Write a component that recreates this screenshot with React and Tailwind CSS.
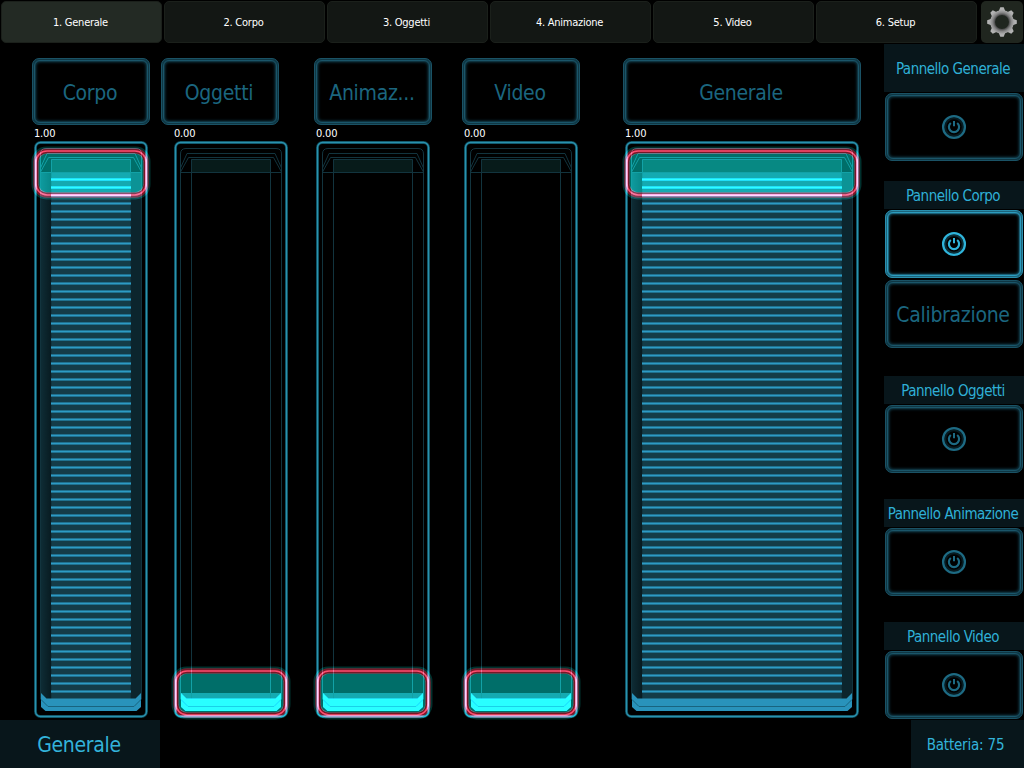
import { useState } from 'react';
import clsx from 'clsx';

const TABS = ['1. Generale', '2. Corpo', '3. Oggetti', '4. Animazione', '5. Video', '6. Setup'];

const HEADERS = [
  { label: 'Corpo', className: 'ml-8 w-[118px]' },
  { label: 'Oggetti', className: 'ml-[11px] w-[118px]' },
  { label: 'Animaz...', className: 'ml-[35px] w-[118px]' },
  { label: 'Video', className: 'ml-[30px] w-[118px]' },
  { label: 'Generale', className: 'ml-[43px] w-[238px]' },
];

const FADERS = [
  { id: 'corpo', value: 1, width: 114, className: 'ml-[34px]' },
  { id: 'oggetti', value: 0, width: 114, className: 'ml-[26px]' },
  { id: 'animazione', value: 0, width: 114, className: 'ml-7' },
  { id: 'video', value: 0, width: 114, className: 'ml-[34px]' },
  { id: 'generale', value: 1, width: 234, className: 'ml-[47px]' },
];

const PANELS = [
  { label: 'Pannello Generale', labelClass: 'h-12 pt-[3px]', className: '' },
  { label: 'Pannello Corpo', labelClass: 'h-7 pt-[3px]', className: 'mt-5', extra: 'Calibrazione' },
  { label: 'Pannello Oggetti', labelClass: 'h-7 pt-[3px]', className: 'mt-7' },
  { label: 'Pannello Animazione', labelClass: 'h-7 pt-[3px]', className: 'mt-[26px]' },
  { label: 'Pannello Video', labelClass: 'h-7 pt-[3px]', className: 'mt-[26px]' },
];

function GearIcon() {
  return (
    <svg width="32" height="32" viewBox="-16 -16 32 32">
      <defs>
        <radialGradient id="gear" gradientUnits="userSpaceOnUse" cx="0" cy="0" r="15">
          <stop offset="0.48" stopColor="#4c4c4c" />
          <stop offset="0.62" stopColor="#858585" />
          <stop offset="0.8" stopColor="#adadad" />
          <stop offset="1" stopColor="#b8b8b8" />
        </radialGradient>
      </defs>
      {[0, 45, 90, 135, 180, 225, 270, 315].map((a) => (
        <path key={a} d="M-3.6 -10 L-1.7 -14.8 H1.7 L3.6 -10 Z" fill="url(#gear)" transform={`rotate(${a})`} />
      ))}
      <circle r="9.4" fill="none" stroke="url(#gear)" strokeWidth="4.8" />
    </svg>
  );
}

function PowerIcon({ on }) {
  return (
    <svg
      width="26"
      height="26"
      viewBox="-13 -13 26 26"
      fill="none"
      className={on ? 'text-[#2fb4db]' : 'text-[#1d6a83]'}
    >
      <circle r="8.8" stroke="currentColor" strokeWidth="2" opacity="0.25" />
      <circle r="10.9" stroke="currentColor" strokeWidth="2.3" />
      <path d="M-3.2 -4 A5.1 5.1 0 1 0 3.2 -4" stroke="currentColor" strokeWidth="2.2" />
      <path d="M0 -6 V-0.8" stroke="currentColor" strokeWidth="2" />
    </svg>
  );
}

function NeonButton({ active, className, onClick, children }) {
  return (
    <button
      onClick={onClick}
      className={clsx(
        'shrink-0 rounded-[7px] border p-px',
        active ? 'border-[#2a8fae] bg-[#1c657c]' : 'border-[#1a5265] bg-[#0f3744]',
        className
      )}
    >
      <span
        className={clsx(
          'flex h-full w-full rounded-[6px] border p-px',
          active ? 'border-[#2c9cbe] bg-[#1b6178]' : 'border-[#1a5569] bg-[#0e323e]'
        )}
      >
        <span
          className={clsx(
            'flex flex-1 items-center justify-center rounded-[4px] bg-black',
            active
              ? 'text-[#2fb4db] shadow-[inset_0_0_3px_#1b677e]'
              : 'text-[#1b667f] shadow-[inset_0_0_3px_#134657]'
          )}
        >
          {children}
        </span>
      </span>
    </button>
  );
}

function Fader({ value, width: w }) {
  const full = value === 1;
  const stripes = full ? Array.from({ length: 65 }, (_, i) => 37 + i * 8) : [];
  const r = w - 6.5;
  const knobY = full ? 10 : 530;
  const top = full ? 31 : 552;

  return (
    <svg width={w} height="576" viewBox={`0 0 ${w} 576`} fill="none" className="isolate block overflow-visible">
      <defs>
        <linearGradient id="side" x1="0" x2="1">
          <stop offset="0" stopColor="#0e2c35" />
          <stop offset="1" stopColor="#081b21" />
        </linearGradient>
      </defs>

      {/* housing */}
      <rect x="1.5" y="1.5" width={w - 3} height="574" rx="5" stroke="#0e4a58" strokeWidth="3" />
      <rect x="1.5" y="1.5" width={w - 3} height="574" rx="5" stroke="#2a91ae" strokeWidth="1.3" />

      {/* level */}
      <rect x="6.5" y={top} width={r - 6.5} height={558 - top} fill={full ? '#0c252d' : '#143c48'} />
      {full && (
        <>
          <rect x="7" y={top} width="10" height={558 - top} fill="url(#side)" />
          <rect x="17" y={top} width={w - 34} height={558 - top} fill="#143c48" />
        </>
      )}

      {/* top bezel */}
      <rect x="17" y="18" width={w - 34} height="13" fill="#071b1a" />
      <g stroke="#12343e">
        <path d={`M6.5 558 V13 Q6.5 7.5 12 7.5 H${w - 12} Q${r} 7.5 ${r} 13 V558`} />
        <path d={`M6.5 27 L13 12.5 H${w - 13} L${r} 27`} />
        <path d={`M6.5 31 L14.5 16.5 H${w - 14.5} L${r} 31`} />
        <path d={`M6.5 31.5 H${r}`} />
        <path d={`M17.5 558 V18.5 H${w - 17.5} V558`} />
      </g>
      {stripes.map((y) => (
        <g key={y}>
          <rect x="17" y={y} width={w - 34} height="3" fill="#20718f" />
          <rect x="17" y={y + 1} width={w - 34} height="1" fill="#2d9bc4" />
        </g>
      ))}

      {/* base */}
      <path
        d={`M7 552 L12.5 557.5 H${w - 12.5} L${w - 7} 552 V566 L${w - 11.5} 570 H11.5 L7 566 Z`}
        fill="#2993bb"
      />
      <path d={`M7 558.5 L14 565.5 H${w - 14} L${w - 7} 558.5`} stroke="#18647f" />

      {/* knob */}
      <g className="mix-blend-plus-lighter">
        <rect x="-1.5" y={knobY - 3.5} width={w + 3} height="51" rx="14" stroke="#00302d" strokeWidth="2" />
        <rect x="4.5" y={knobY + 2.5} width={w - 9} height="39" rx="8" fill="#006e69" />
      </g>
      <g className="mix-blend-plus-lighter">
        <rect x="2" y={knobY} width={w - 4} height="44" rx="11" stroke="#741827" strokeWidth="5.5" />
      </g>
      <g className="mix-blend-plus-lighter">
        <rect x="2" y={knobY} width={w - 4} height="44" rx="11" stroke="#8a3448" strokeWidth="1.6" />
      </g>
    </svg>
  );
}

export default function App() {
  const [tab, setTab] = useState(0);
  const [activePanel, setActivePanel] = useState('Pannello Corpo');

  return (
    <div className="flex h-[768px] w-[1024px] flex-col overflow-hidden bg-black font-['DejaVu_Sans_Condensed','DejaVu_Sans',sans-serif] [font-stretch:condensed]">
      <nav className="flex h-11 shrink-0 gap-0.5 pt-px pl-px">
        {TABS.map((t, i) => (
          <button
            key={t}
            onClick={() => setTab(i)}
            className={clsx(
              'h-[42px] w-[161px] rounded-[5px] border border-[#1b201b] pt-0.5 pr-0.5 text-[11px] tracking-[-0.25px] text-white',
              i === tab ? 'bg-[#232a24]' : 'bg-[#131714]'
            )}
          >
            {t}
          </button>
        ))}
        <button className="ml-0.5 flex h-[42px] w-[42px] items-center justify-center rounded-[5px] bg-[#20261f]">
          <GearIcon />
        </button>
      </nav>

      <div className="flex h-[676px] shrink-0">
        <main className="w-[884px]">
          <div className="flex pt-3.5">
            {HEADERS.map((h) => (
              <NeonButton key={h.label} className={clsx('h-[67px]', h.className)}>
                <span className="pt-1 pr-0.5 text-[21px] tracking-[-0.3px]">{h.label}</span>
              </NeonButton>
            ))}
          </div>
          <div className="flex">
            {FADERS.map((f) => (
              <div key={f.id} className={f.className}>
                <div className="h-4 pt-px text-[11px] leading-4 tracking-[-0.2px] text-white">
                  {f.value.toFixed(2)}
                </div>
                <Fader value={f.value} width={f.width} />
              </div>
            ))}
          </div>
        </main>

        <aside className="w-[140px]">
          {PANELS.map((p) => (
            <section key={p.label} className={clsx('flex flex-col', p.className)}>
              <div
                className={clsx(
                  'flex items-center justify-center bg-[#08161b] pr-0.5 text-[15px] tracking-[-0.5px] whitespace-nowrap text-[#2fb0d6]',
                  p.labelClass
                )}
              >
                {p.label}
              </div>
              <NeonButton
                active={activePanel === p.label}
                onClick={() => setActivePanel(p.label)}
                className="mt-px ml-px h-[68px] w-[138px]"
              >
                <PowerIcon on={activePanel === p.label} />
              </NeonButton>
              {p.extra && (
                <NeonButton className="mt-0.5 ml-px h-[68px] w-[138px]">
                  <span className="pt-1 pr-0.5 text-[21px] tracking-[-0.3px]">{p.extra}</span>
                </NeonButton>
              )}
            </section>
          ))}
        </aside>
      </div>

      <footer className="flex h-12 shrink-0 justify-between text-[#33b3da]">
        <div className="flex w-40 items-center justify-center bg-[#08161b] pt-1 pr-0.5 text-[21px] tracking-[-0.3px]">
          Generale
        </div>
        <div className="flex w-[113px] items-center justify-center bg-[#08161b] pt-0.5 pr-1 text-[15px] tracking-[-0.2px]">
          Batteria: 75
        </div>
      </footer>
    </div>
  );
}
